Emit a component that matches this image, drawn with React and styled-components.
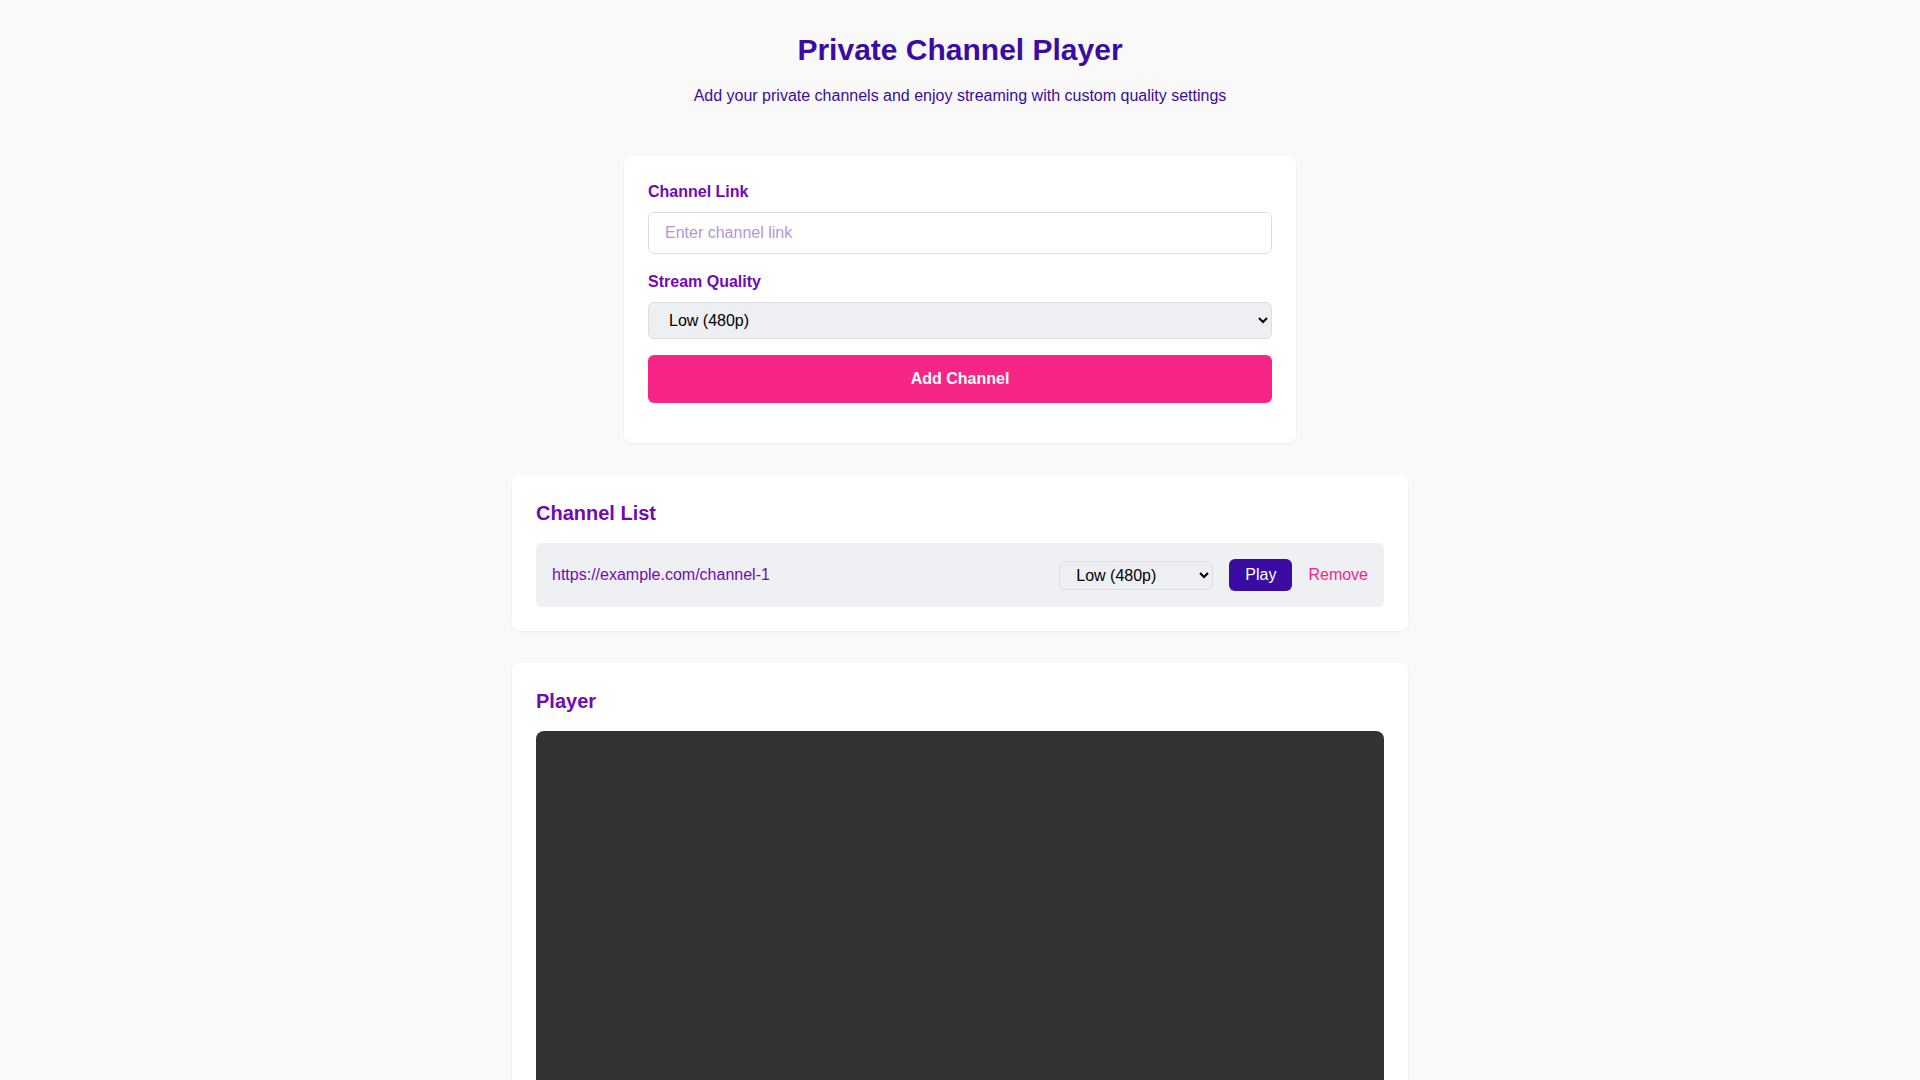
import React, { useState } from "react";
import styled, { createGlobalStyle } from "styled-components";

const GlobalStyle = createGlobalStyle`
  * {
    box-sizing: border-box;
  }
  body {
    margin: 0;
    background: #f9f9f9;
    font-family: "Liberation Sans", Arial, sans-serif;
    line-height: 1.5;
  }
`;

const Page = styled.div`
  padding: 33px 20px 40px;
`;

const Header = styled.header`
  text-align: center;
  margin-bottom: 51px;
`;

const Title = styled.h1`
  margin: 0 0 20px;
  font-size: 30px;
  line-height: 34px;
  font-weight: 700;
  color: #3a0ca3;
`;

const Subtitle = styled.p`
  margin: 0;
  font-size: 16px;
  line-height: 18px;
  color: #3a0ca3;
`;

const Card = styled.section`
  width: ${(p) => p.$width}px;
  margin: 0 auto 32px;
  padding: 24px;
  background: #ffffff;
  border-radius: 8px;
  box-shadow: 0 1px 3px rgba(0, 0, 0, 0.06);
`;

const FormGroup = styled.div`
  margin-bottom: 16px;
`;

const Label = styled.label`
  display: block;
  margin-bottom: 8px;
  font-size: 16px;
  line-height: 24px;
  font-weight: 700;
  color: #7209b7;
`;

const Input = styled.input`
  display: block;
  width: 100%;
  height: 42px;
  padding: 0 16px;
  font-family: inherit;
  font-size: 16px;
  color: #222;
  background: #ffffff;
  border: 1px solid #dedde3;
  border-radius: 6px;
  outline: none;

  &::placeholder {
    color: #b297d6;
  }
`;

const Select = styled.select`
  display: block;
  width: ${(p) => (p.$small ? "154px" : "100%")};
  height: ${(p) => (p.$small ? "29px" : "37px")};
  padding: 0 ${(p) => (p.$small ? "12px" : "16px")};
  font-family: inherit;
  font-size: 16px;
  color: #000;
  background-color: #eeeff2;
  border: 1px solid #dcdce2;
  border-radius: 6px;
`;

const PrimaryButton = styled.button`
  display: block;
  width: 100%;
  height: 48px;
  margin-bottom: 16px;
  font-family: inherit;
  font-size: 16px;
  font-weight: 700;
  color: #ffffff;
  background: #f72585;
  border: none;
  border-radius: 6px;
  cursor: pointer;
`;

const SectionTitle = styled.h2`
  margin: 0 0 16px;
  font-size: 20px;
  line-height: 28px;
  font-weight: 700;
  color: #7209b7;
`;

const ChannelRow = styled.div`
  display: flex;
  align-items: center;
  justify-content: space-between;
  padding: 16px;
  background: #eff0f3;
  border-radius: 6px;
`;

const ChannelUrl = styled.span`
  font-size: 16px;
  line-height: 24px;
  color: #7209b7;
`;

const Actions = styled.div`
  display: flex;
  align-items: center;
  gap: 16px;
`;

const PlayButton = styled.button`
  height: 32px;
  padding: 0 16px;
  font-family: inherit;
  font-size: 16px;
  color: #ffffff;
  background: #3a0ca3;
  border: none;
  border-radius: 6px;
  cursor: pointer;
`;

const TextButton = styled.button`
  padding: 0;
  font-family: inherit;
  font-size: 16px;
  color: #f72585;
  background: none;
  border: none;
  cursor: pointer;
`;

const Screen = styled.div`
  width: 100%;
  aspect-ratio: 16 / 9;
  background: #333333;
  border-radius: 8px;
`;

const qualities = ["Low (480p)", "Medium (720p)", "High (1080p)"];

export default function App() {
  const [link, setLink] = useState("");
  const [quality, setQuality] = useState(qualities[0]);
  const [channels] = useState([
    { url: "https://example.com/channel-1", quality: qualities[0] },
  ]);

  return (
    <>
      <GlobalStyle />
      <Page>
        <Header>
          <Title>Private Channel Player</Title>
          <Subtitle>
            Add your private channels and enjoy streaming with custom quality
            settings
          </Subtitle>
        </Header>

        <Card $width={672}>
          <FormGroup>
            <Label htmlFor="link">Channel Link</Label>
            <Input
              id="link"
              placeholder="Enter channel link"
              value={link}
              onChange={(e) => setLink(e.target.value)}
            />
          </FormGroup>
          <FormGroup>
            <Label htmlFor="quality">Stream Quality</Label>
            <Select
              id="quality"
              value={quality}
              onChange={(e) => setQuality(e.target.value)}
            >
              {qualities.map((q) => (
                <option key={q}>{q}</option>
              ))}
            </Select>
          </FormGroup>
          <PrimaryButton>Add Channel</PrimaryButton>
        </Card>

        <Card $width={896}>
          <SectionTitle>Channel List</SectionTitle>
          {channels.map((c) => (
            <ChannelRow key={c.url}>
              <ChannelUrl>{c.url}</ChannelUrl>
              <Actions>
                <Select $small defaultValue={c.quality}>
                  {qualities.map((q) => (
                    <option key={q}>{q}</option>
                  ))}
                </Select>
                <PlayButton>Play</PlayButton>
                <TextButton>Remove</TextButton>
              </Actions>
            </ChannelRow>
          ))}
        </Card>

        <Card $width={896}>
          <SectionTitle>Player</SectionTitle>
          <Screen />
        </Card>
      </Page>
    </>
  );
}
